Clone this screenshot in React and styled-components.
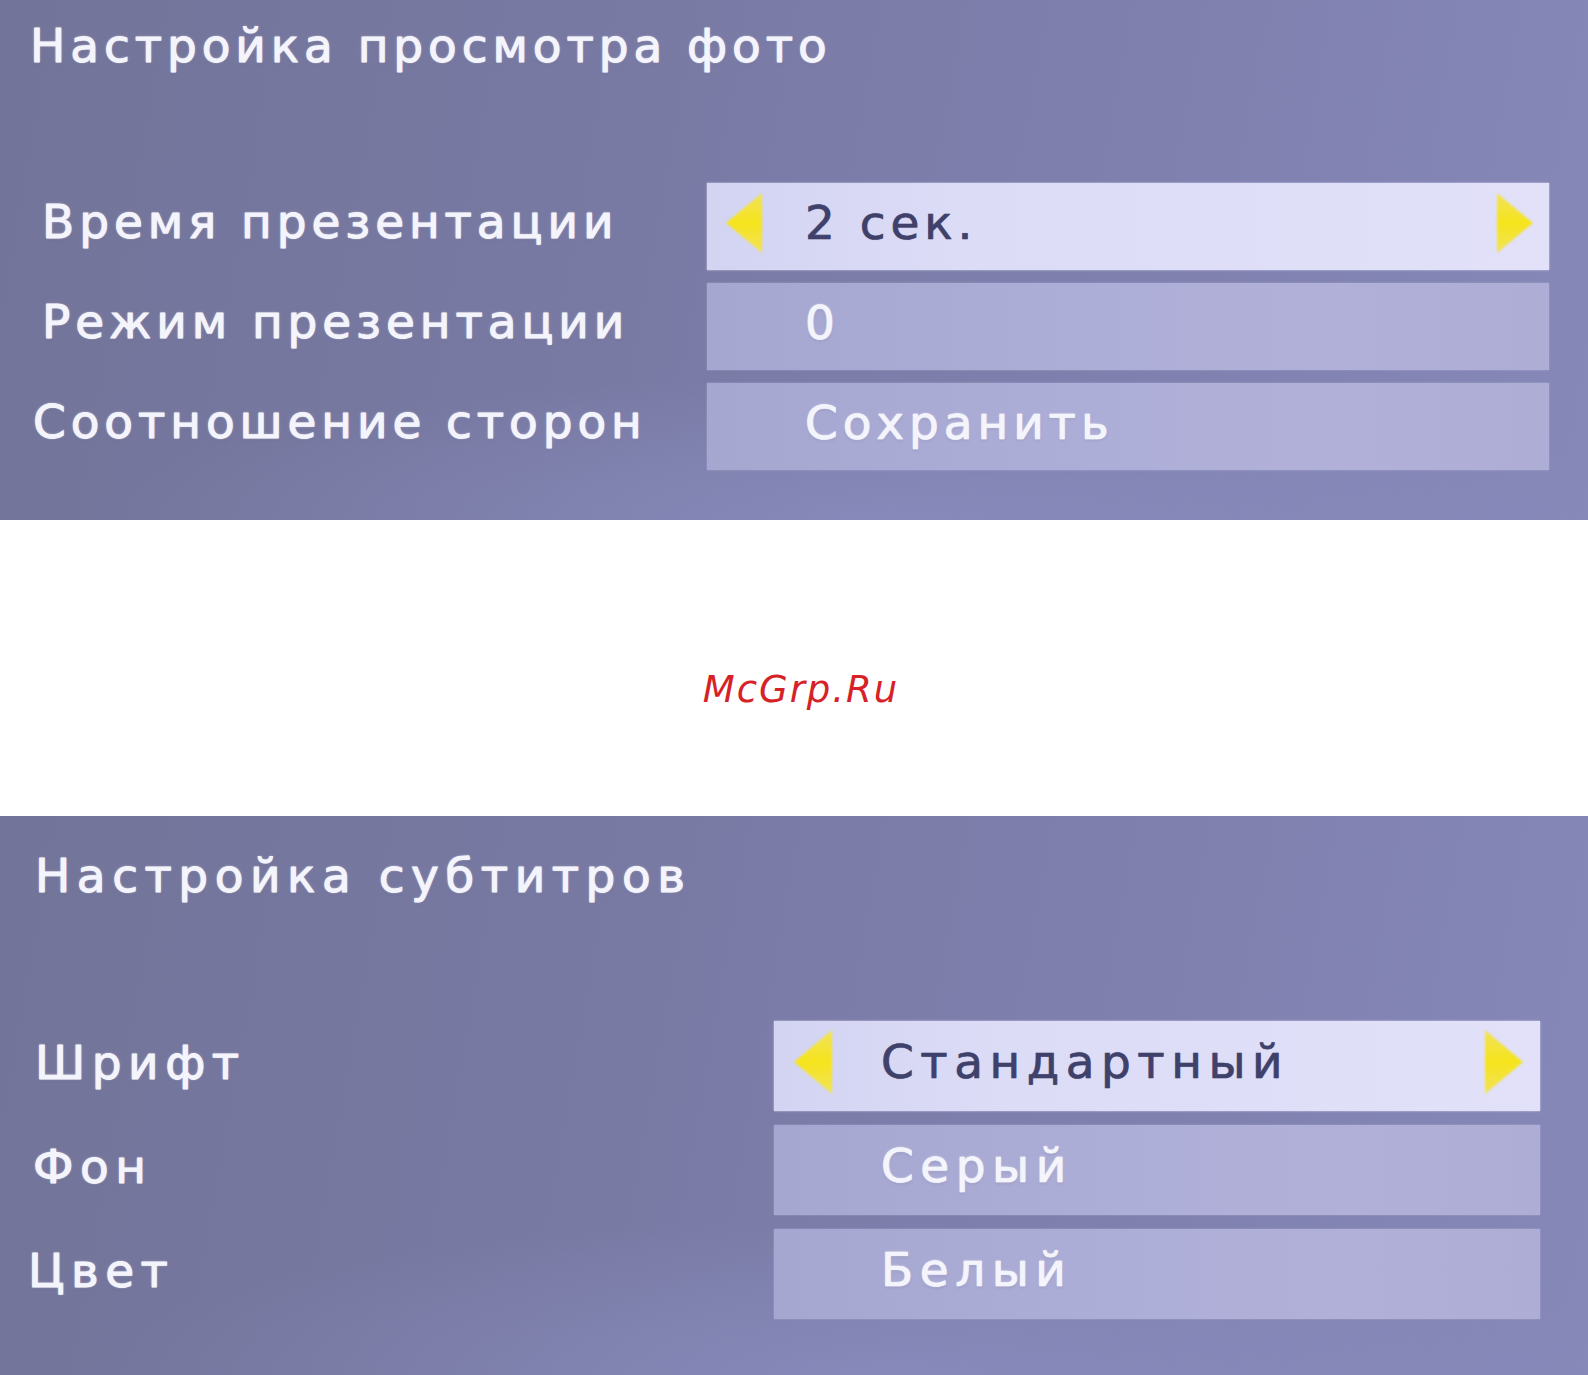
import React from "react";
import styled, { createGlobalStyle } from "styled-components";

const GlobalStyle = createGlobalStyle`
  html, body {
    margin: 0;
    padding: 0;
    background: #ffffff;
  }
  body {
    width: 1588px;
    font-family: "DejaVu Sans", "Noto Sans", sans-serif;
  }
`;

const Page = styled.main`
  display: flex;
  flex-direction: column;
  width: 1588px;
`;

const Screen = styled.section`
  box-sizing: border-box;
  height: ${(p) => p.$height}px;
  padding: ${(p) => p.$padTop}px 0 0 ${(p) => p.$padLeft}px;
  display: flex;
  flex-direction: column;
  background:
    radial-gradient(ellipse 70% 40% at 55% 100%, rgba(150, 155, 210, 0.4), rgba(150, 155, 210, 0) 70%),
    linear-gradient(100deg, #737499 0%, #797aa4 40%, #7f80ae 70%, #8688b8 100%);
`;

const menuText = `
  font-family: "DejaVu Sans", sans-serif;
  font-weight: normal;
  font-size: 47px;
  line-height: 48px;
  white-space: nowrap;
`;

const lightGlow = "0 0 1px #f4f4fc, 0 0 3px rgba(255, 255, 255, 0.55), 0 1px 3px rgba(60, 60, 100, 0.35)";

const Title = styled.h1`
  ${menuText}
  margin: 0 0 0 ${(p) => p.$indent}px;
  letter-spacing: ${(p) => p.$spacing}px;
  color: #f4f4fc;
  -webkit-text-stroke: 0.8px #f4f4fc;
  text-shadow: ${lightGlow};
`;

const List = styled.div`
  display: flex;
  flex-direction: column;
  gap: ${(p) => p.$gap}px;
  margin-top: ${(p) => p.$top}px;
`;

const Row = styled.div`
  display: grid;
  grid-template-columns: ${(p) => p.$labelCol}px ${(p) => p.$fieldWidth}px;
  align-items: center;
  height: ${(p) => p.$height}px;
`;

const Label = styled.span`
  ${menuText}
  margin-left: ${(p) => p.$indent}px;
  margin-bottom: ${(p) => p.$lift}px;
  letter-spacing: ${(p) => p.$spacing}px;
  color: #f4f4fc;
  -webkit-text-stroke: 0.8px #f4f4fc;
  text-shadow: ${lightGlow};
`;

const Field = styled.div`
  box-sizing: border-box;
  height: 100%;
  display: flex;
  align-items: center;
  padding: 0 ${(p) => p.$padRight}px 8px ${(p) => (p.$active ? p.$arrowLeft : p.$textLeft)}px;
  background: ${(p) =>
    p.$active
      ? "linear-gradient(90deg, #d3d4f2 0%, #dcdcf7 30%, #e2e1f9 100%)"
      : "linear-gradient(90deg, #a6a7d1 0%, #adaed8 45%, #b1b0d8 75%, #aeadd6 100%)"};
  box-shadow: ${(p) =>
    p.$active ? "0 0 2px rgba(240, 240, 255, 0.7)" : "0 0 2px rgba(180, 180, 220, 0.6)"};
`;

const Value = styled.span`
  ${menuText}
  flex: 1;
  margin-left: ${(p) => p.$offset}px;
  letter-spacing: ${(p) => p.$spacing}px;
  color: ${(p) => (p.$active ? "#40416a" : "#f4f4fc")};
  -webkit-text-stroke: 0.6px ${(p) => (p.$active ? "#40416a" : "#f4f4fc")};
  text-shadow: ${(p) =>
    p.$active ? "0 0 1px rgba(64, 65, 106, 0.6)" : lightGlow};
`;

const ArrowMark = styled.svg`
  display: block;
  flex: none;
  filter: blur(0.8px);
`;

const Watermark = styled.div`
  height: ${(p) => p.$height}px;
  display: flex;
  align-items: center;
  justify-content: center;
  padding: 42px 0 0 14px;
  box-sizing: border-box;
  font-family: "DejaVu Sans", sans-serif;
  font-style: oblique;
  font-size: 37px;
  letter-spacing: 2px;
  color: #d62227;
`;

function Arrow({ dir, w, h }) {
  const id = `arrow-fill-${dir}`;
  const pts =
    dir === "left"
      ? `1,${h / 2} ${w - 1},1 ${w - 1},${h - 1}`
      : `${w - 1},${h / 2} 1,1 1,${h - 1}`;
  return (
    <ArrowMark width={w} height={h} viewBox={`0 0 ${w} ${h}`}>
      <defs>
        <linearGradient id={id} x1="0" y1="0" x2="0" y2="1">
          <stop offset="0" stopColor="#f1e25a" />
          <stop offset="0.5" stopColor="#f6e41c" />
          <stop offset="1" stopColor="#f1e25a" />
        </linearGradient>
      </defs>
      <polygon points={pts} fill={`url(#${id})`} />
    </ArrowMark>
  );
}

function SettingsScreen({ title, rows, cfg }) {
  return (
    <Screen $height={cfg.height} $padTop={cfg.padTop} $padLeft={cfg.padLeft}>
      <Title $indent={cfg.titleIndent} $spacing={cfg.spacing}>
        {title}
      </Title>
      <List $gap={cfg.gap} $top={cfg.listTop}>
        {rows.map((r, i) => (
          <Row
            key={r.label}
            $labelCol={cfg.labelCol}
            $fieldWidth={cfg.fieldWidth}
            $height={cfg.rowHeight}
          >
            <Label $indent={r.indent} $lift={cfg.lift} $spacing={cfg.spacing}>
              {r.label}
            </Label>
            <Field
              $active={i === 0}
              $arrowLeft={cfg.arrowLeft}
              $textLeft={cfg.textLeft}
              $padRight={cfg.arrowRight}
            >
              {i === 0 && <Arrow dir="left" w={cfg.arrowW} h={cfg.arrowH} />}
              <Value
                $active={i === 0}
                $spacing={cfg.spacing}
                $offset={i === 0 ? cfg.textLeft - cfg.arrowLeft - cfg.arrowW : 0}
              >
                {r.value}
              </Value>
              {i === 0 && <Arrow dir="right" w={cfg.arrowW} h={cfg.arrowH} />}
            </Field>
          </Row>
        ))}
      </List>
    </Screen>
  );
}

const photoRows = [
  { label: "Время презентации", value: "2 сек.", indent: 12 },
  { label: "Режим презентации", value: "0", indent: 12 },
  { label: "Соотношение сторон", value: "Сохранить", indent: 3 },
];

const subtitleRows = [
  { label: "Шрифт", value: "Стандартный", indent: 7 },
  { label: "Фон", value: "Серый", indent: 5 },
  { label: "Цвет", value: "Белый", indent: 0 },
];

const photoCfg = {
  height: 520,
  padTop: 22,
  padLeft: 30,
  titleIndent: 0,
  spacing: 4.9,
  gap: 13,
  listTop: 113,
  rowHeight: 87,
  labelCol: 677,
  fieldWidth: 842,
  lift: 10,
  arrowLeft: 18,
  arrowRight: 15,
  arrowW: 38,
  arrowH: 62,
  textLeft: 98,
};

const subtitleCfg = {
  height: 559,
  padTop: 36,
  padLeft: 28,
  titleIndent: 7,
  spacing: 6.5,
  gap: 14,
  listTop: 121,
  rowHeight: 90,
  labelCol: 746,
  fieldWidth: 766,
  lift: 6,
  arrowLeft: 19,
  arrowRight: 16,
  arrowW: 40,
  arrowH: 66,
  textLeft: 107,
};

export default function App() {
  return (
    <Page>
      <GlobalStyle />
      <SettingsScreen title="Настройка просмотра фото" rows={photoRows} cfg={photoCfg} />
      <Watermark $height={296}>McGrp.Ru</Watermark>
      <SettingsScreen title="Настройка субтитров" rows={subtitleRows} cfg={subtitleCfg} />
    </Page>
  );
}
